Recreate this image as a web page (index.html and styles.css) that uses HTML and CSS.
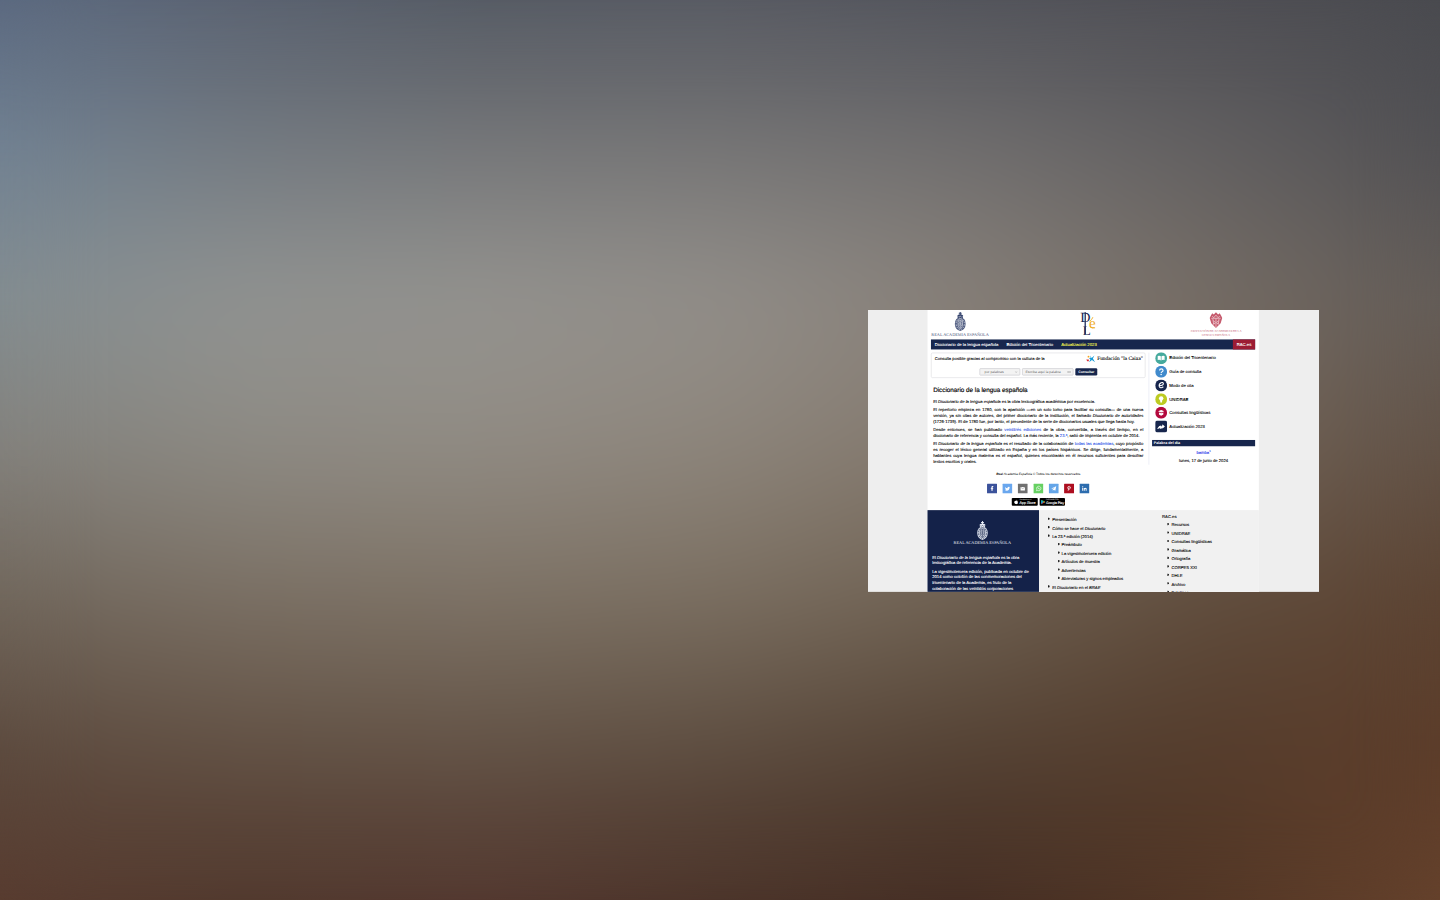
FILE: index.html
```html
<!DOCTYPE html>
<html lang="es">
<head>
<meta charset="utf-8">
<title>Diccionario de la lengua española</title>
<link rel="stylesheet" href="styles.css">
</head>
<body>
<svg width="0" height="0" class="defs" aria-hidden="true">
  <symbol id="crest" viewBox="0 0 40 60">
    <path d="M18.500 0h3v3h3v3h-3v4h-3V6h-3V3h3z" fill="currentColor"/>
    <path d="M11 11q9-7 18 0l-1 9H12z" fill="currentColor"/>
    <path d="M20 17q17 2 17 21-1 18-17 22Q4 56 3 38 3 19 20 17z" fill="currentColor" opacity=".88"/>
    <path d="M20 21q13 2 13 17-1 14-13 18Q8 52 7 38 7 23 20 21z" fill="none" stroke="var(--cut)" stroke-width="2" stroke-dasharray="5 3"/>
    <path d="M13 26h14v17q-1 7-7 9-6-2-7-9zM13 38h14M20 26v26" fill="none" stroke="var(--cut)" stroke-width="1.600"/>
    <path d="M15 29l3 5M25 29l-3 5M15 41l3 4M25 41l-3 4M13 14l3 3 4-4 4 4 3-3" fill="none" stroke="var(--cut)" stroke-width="1.600"/>
  </symbol>
</svg>
<div class="backdrop">
  <div class="band b0"></div><div class="band b1"></div><div class="band b2"></div><div class="band b3"></div>
  <div class="band b4"></div><div class="band b5"></div><div class="band b6"></div>
  <div class="soften"></div>
</div>
<main class="window">
 <div class="page">
  <div class="sheet">
   <header class="brands">
    <div class="rae"><svg class="crest"><use href="#crest"/></svg><span>REAL ACADEMIA ESPAÑOLA</span></div>
    <svg class="dle" viewBox="0 0 56 82" aria-label="DLE">
      <text x="2" y="35" class="d">D</text>
      <text x="10" y="77" class="l">L</text>
      <text x="30" y="56" class="e">e</text>
      <path d="M17.500 5v70" stroke="#192653" stroke-width="4"/>
      <path d="M31 34q8-4 11-13M32 50q6 8 17 5" stroke="#efad27" stroke-width="3" fill="none"/>
    </svg>
    <div class="asale">
      <svg viewBox="0 0 44 52" class="shield"><path d="M5 13l5-9 5 4 7-7 7 7 5-4 5 9 3 6-5 17-15 15L7 36 2 19z" fill="#c65b6e"/><path d="M7 20h30M10 13l5 5 7-8 7 8 5-5M12 22l3 18M32 22l-3 18M22 21v28M14 28l6 5M30 28l-6 5M14 38l6-3M30 38l-6-3" stroke="#fff" stroke-width="1.700" fill="none"/></svg>
      <span>ASOCIACIÓN DE ACADEMIAS DE LA<br>LENGUA ESPAÑOLA</span>
    </div>
   </header>
   <nav class="nav"><a>Diccionario de la lengua española</a><a>Edición del Tricentenario</a><a class="hot">Actualización 2023</a><a class="rac">RAC.es</a></nav>
   <div class="columns">
    <section class="main">
     <div class="search">
      <div class="sponsor"><span>Consulta posible gracias al compromiso con la cultura de la</span>
       <div class="caixa"><svg viewBox="0 0 30 26"><path d="M13 2l5 8 9-8-5 10 7 12-10-7-9 7 4-10-5-4h6z" fill="#159bd8"/><circle cx="8" cy="6" r="3" fill="#f3a51c"/><path d="M1 15h8v6H4z" fill="#d92f36"/></svg><b>Fundación "la Caixa"</b></div>
      </div>
      <div class="controls"><div class="field sel"><span>por palabras</span><svg viewBox="0 0 10 10"><path d="M2 3l3 4 3-4" fill="none" stroke="#777"/></svg></div><div class="field word"><span>Escriba aquí la palabra</span><svg viewBox="0 0 12 10"><path d="M1 5h10M1 3v4M4 3v4M8 3v4M11 3v4" fill="none" stroke="#777"/></svg></div><div class="go">Consultar</div></div>
     </div>
     <article class="copy">
      <h1>Diccionario de la lengua española</h1>
      <p><span class="end">El <i>Diccionario de la lengua española</i> es la obra lexicográfica académica por excelencia.</span></p>
      <p><span>El repertorio empieza en 1780, con la aparición —en un solo tomo para facilitar su consulta— de una nueva</span><span>versión, ya sin citas de autores, del primer diccionario de la institución, el llamado <i>Diccionario de autoridades</i></span><span class="end">(1726-1739). El de 1780 fue, por tanto, el precedente de la serie de diccionarios usuales que llega hasta hoy.</span></p>
      <p><span>Desde entonces, se han publicado <a>veintitrés ediciones</a> de la obra, convertida, a través del tiempo, en el</span><span class="end">diccionario de referencia y consulta del español. La más reciente, la <a>23.ª</a>, salió de imprenta en octubre de 2014.</span></p>
      <p><span>El <i>Diccionario de la lengua española</i> es el resultado de la colaboración de <a>todas las academias</a>, cuyo propósito</span><span>es recoger el léxico general utilizado en España y en los países hispánicos. Se dirige, fundamentalmente, a</span><span>hablantes cuya lengua materna es el español, quienes encontrarán en él recursos suficientes para descifrar</span><span class="end">textos escritos y orales.</span></p>
     </article>
     <div class="rights"><i><b>Real</b> Academia Española</i> © Todos los derechos reservados</div>
     <div class="social">
      <svg viewBox="0 0 32 32"><rect width="32" height="32" fill="#3b529b"/><path d="M14 23V17h-2v-3h2v-2q0-4 4-4h2v3h-1q-1 0-1 1v2h2l-.5 3H18v6z" fill="#fff"/></svg>
      <svg viewBox="0 0 32 32"><rect width="32" height="32" fill="#6aa7ee"/><path d="M9 11q3 4 7 4 0-5 4-5l2 1 2-1-1 3q0 10-9 10-3 0-6-2 3 0 4-1-2 0-3-2h2q-3-2-2-7z" fill="#fff"/></svg>
      <svg viewBox="0 0 32 32"><rect width="32" height="32" fill="#707070"/><path d="M9 11h14v11H9z" fill="#fff"/><path d="M9 12l7 4 7-4" stroke="#707070" stroke-width="1.500" fill="none"/></svg>
      <svg viewBox="0 0 32 32"><rect width="32" height="32" fill="#66d062"/><path d="M10 23l1-4a7 7 0 1 1 3 3z" fill="none" stroke="#fff" stroke-width="2"/><path d="M13 12q0 6 7 7l1-2-2-1-1 1-3-3 1-1-1-2z" fill="#fff"/></svg>
      <svg viewBox="0 0 32 32"><rect width="32" height="32" fill="#64a5e8"/><path d="M8 16l16-7-3 14-5-3-3 3v-5l7-6-8 5z" fill="#fff"/></svg>
      <svg viewBox="0 0 32 32"><rect width="32" height="32" fill="#ad0e20"/><path d="M13 17q-3-4 0-7 5-2 7 1 1 6-3 7l-2-1m1-5l-3 11" stroke="#fff" stroke-width="2.400" fill="none"/></svg>
      <svg viewBox="0 0 32 32"><rect width="32" height="32" fill="#2c6cae"/><path d="M9 14h3v9H9zM14 14h3v1q5-3 6 2v6h-3v-5q-1-2-3 0v5h-3z" fill="#fff"/><circle cx="10.500" cy="10.500" r="2" fill="#fff"/></svg>
     </div>
     <div class="stores">
      <div class="badge"><svg viewBox="0 0 16 18"><path d="M8 5Q11 2 14 6q-3 3 1 6-3 7-7 4-5 2-7-5 0-8 7-6zM8 4q0-3 3-4 0 3-3 4" fill="#fff"/></svg><span><small>Consíguelo en el</small>App Store</span></div>
      <div class="badge play"><svg viewBox="0 0 16 18"><path d="M1 1v16l8-8z" fill="#19bdf0"/><path d="M1 1l8 8 3-3z" fill="#36ce70"/><path d="M1 17l8-8 3 3z" fill="#ec4353"/><path d="M9 9l3-3 4 3-4 3z" fill="#fbc62e"/></svg><span><small>DISPONIBLE EN</small>Google Play</span></div>
     </div>
    </section>
    <aside class="side">
     <ul class="links">
      <li><svg viewBox="0 0 38 38"><circle cx="19" cy="19" r="19" fill="#46aa9d"/><path d="M8 12q6-3 10 1v13q-4-3-10-1zM30 12q-6-3-10 1v13q4-3 10-1z" fill="#fff"/></svg>Edición del Tricentenario</li>
      <li><svg viewBox="0 0 38 38"><circle cx="19" cy="19" r="19" fill="#408acc"/><path d="M14 15q0-5 5.500-5t5.500 5q0 3-3 4-3 1-3 4" fill="none" stroke="#fff" stroke-width="3.600"/><circle cx="19" cy="28" r="2.400" fill="#fff"/></svg>Guía de consulta</li>
      <li><svg viewBox="0 0 38 38"><circle cx="19" cy="19" r="19" fill="#17264d"/><path d="M13 20q13 0 13-7-1-5-7-3-8 4-6 12 4 8 13 1" fill="none" stroke="#fff" stroke-width="3.500"/></svg>Modo de cita</li>
      <li><svg viewBox="0 0 38 38"><circle cx="19" cy="19" r="19" fill="#bdcb22"/><circle cx="19" cy="16" r="7" fill="#fff"/><path d="M15.500 21h7l-1 8h-5z" fill="#fff"/></svg>UNIDRAE</li>
      <li><svg viewBox="0 0 38 38"><circle cx="19" cy="19" r="19" fill="#b3093d"/><path d="M9 14l10-4 10 4-10 4zM12 18l7 3 7-3v7l-7 4-7-4z" fill="#fff"/></svg>Consultas lingüísticas</li>
      <li><svg viewBox="0 0 38 38"><rect width="38" height="38" rx="7" fill="#17264d"/><path d="M6 26l7-9 6-1v4l4-5v-3l8 7-8 7v-3l-4 3h-4l-2-3-2 3z" fill="#fff"/></svg>Actualización 2023</li>
     </ul>
     <h2>Palabra del día</h2>
     <div class="bamba">bamba<sup>1</sup></div>
     <div class="date">lunes, 17 de junio de 2024</div>
    </aside>
   </div>
   <footer class="foot">
    <div class="about"><div class="logo"><svg class="crest"><use href="#crest"/></svg><span>REAL ACADEMIA ESPAÑOLA</span></div>
     <p>El <i>Diccionario de la lengua española</i> es la obra<br>lexicográfica de referencia de la Academia.</p>
     <p>La vigesimotercera edición, publicada en octubre de<br>2014 como colofón de las conmemoraciones del<br>tricentenario de la Academia, es fruto de la<br>colaboración de las veintidós corporaciones</p></div>
    <ul class="map"><li>Presentación</li><li>Cómo se hace el <i>Diccionario</i></li><li>La 23.ª edición (2014)</li><li class="sub">Preámbulo</li><li class="sub">La vigesimotercera edición</li><li class="sub">Artículos de muestra</li><li class="sub">Advertencias</li><li class="sub">Abreviaturas y signos empleados</li><li>El <i>Diccionario</i> en el <i>BRAE</i></li></ul>
    <div class="racmap">RAC.es<ul><li>Recursos</li><li>UNIDRAE</li><li>Consultas lingüísticas</li><li>Gramática</li><li>Ortografía</li><li>CORPES XXI</li><li>DHLE</li><li>Archivo</li><li>Boletines</li></ul></div>
   </footer>
  </div>
 </div>
</main>
</body>
</html>
```

FILE: styles.css
```css
* { box-sizing: border-box; }
body { margin: 0; width: 1440px; height: 900px; overflow: hidden; background: #6b6259; font-family: "Liberation Sans", Arial, sans-serif; }
.defs { position: absolute; }
ul, p, h1, h2 { margin: 0; padding: 0; list-style: none; }

/* Colour bands: each one fades in over the band above it */
.backdrop { position: absolute; inset: 0; }
.band, .soften { position: absolute; inset: 0; }
.soften { backdrop-filter: blur(45px); }
.b0 { background: linear-gradient(90deg, rgb(91,105,128), rgb(89,97,112), rgb(83,89,99), rgb(86,89,98), rgb(81,83,91), rgb(78,78,84), rgb(73,74,79)); }
.b1 { background: linear-gradient(90deg, rgb(114,131,148), rgb(116,123,130), rgb(119,120,122), rgb(119,118,118), rgb(113,111,111), rgb(99,97,98), rgb(82,81,84)); mask-image: linear-gradient(transparent 0, #000 150px); }
.b2 { background: linear-gradient(90deg, rgb(131,141,145), rgb(146,148,146), rgb(149,148,144), rgb(147,143,138), rgb(136,129,122), rgb(119,110,102), rgb(100,93,88)); mask-image: linear-gradient(transparent 150px, #000 300px); }
.b3 { background: linear-gradient(90deg, rgb(131,129,124), rgb(141,138,131), rgb(145,139,131), rgb(141,133,123), rgb(130,119,108), rgb(115,101,89), rgb(98,82,70)); mask-image: linear-gradient(transparent 300px, #000 450px); }
.b4 { background: linear-gradient(90deg, rgb(112,102,91), rgb(122,111,99), rgb(125,114,101), rgb(122,110,96), rgb(111,97,82), rgb(96,77,61), rgb(92,67,50)); mask-image: linear-gradient(transparent 450px, #000 600px); }
.b5 { background: linear-gradient(90deg, rgb(92,74,62), rgb(98,81,68), rgb(99,83,70), rgb(93,77,64), rgb(84,66,52), rgb(84,60,44), rgb(93,61,42)); mask-image: linear-gradient(transparent 600px, #000 750px); }
.b6 { background: linear-gradient(90deg, rgb(88,59,47), rgb(80,55,44), rgb(82,54,46), rgb(74,50,40), rgb(68,45,35), rgb(82,54,37), rgb(102,66,44)); mask-image: linear-gradient(transparent 750px, #000 900px); }

.window { position: absolute; left: 868px; top: 310px; width: 451px; height: 281.500px; overflow: hidden; }
.page { width: 1440px; height: 900px; padding: 0 192px 0 190px; background: #eee; color: #000; font-size: 13.330px; overflow: hidden; transform: scale(.3132); transform-origin: 0 0; text-rendering: geometricPrecision; -webkit-text-stroke: .3px; }
.sheet { width: 1058px; background: #fff; }

.brands { height: 94px; padding: 6px 54px 0 12px; display: flex; justify-content: space-between; }
.rae, .logo { display: flex; flex-direction: column; align-items: center; font: 13.600px "Liberation Serif", serif; white-space: nowrap; -webkit-text-stroke: 0; }
.rae { color: #4b587d; --cut: #fff; width: 184px; }
.crest { width: 41px; height: 61px; }
.rae .crest { color: #34436d; }
.rae span { margin-top: 3px; }
.dle { width: 56px; height: 82px; margin: -4px 0 0 118px; font-family: "Liberation Serif", serif; overflow: visible; }
.dle .d { font-size: 45px; fill: #192653; }
.dle .l { font-size: 42px; fill: #192653; }
.dle .e { font-size: 48px; fill: #efad27; }
.asale { width: 166px; margin-left: 124px; display: flex; flex-direction: column; align-items: center; color: #be5167; font: 9.600px/12px "Liberation Serif", serif; text-align: center; white-space: nowrap; -webkit-text-stroke: 0; }
.shield { width: 44px; height: 53px; margin-bottom: 4px; }

.nav { margin: 0 12px 0 11px; height: 32px; background: #17264d; color: #fff; display: flex; align-items: center; gap: 26px; padding-left: 12px; font-size: 13.550px; }
.hot { color: #ffff4d; }
.rac { margin-left: auto; width: 71px; height: 32px; line-height: 32px; background: #9c1c34; text-align: center; }

.columns { height: 513px; padding: 10px 12px 0 11px; display: flex; }
.main { width: 685px; flex: none; }
.search { height: 81px; border: 2px solid #dedee1; border-radius: 5px; padding: 5px 6px 0 10px; }
.sponsor { display: flex; justify-content: space-between; height: 43px; align-items: flex-start; line-height: 28px; white-space: nowrap; }
.caixa { display: flex; gap: 6px; }
.caixa svg { width: 30px; height: 26px; }
.caixa b { font: 17px/26px "Liberation Serif", serif; }
.controls { display: flex; gap: 6px; padding-left: 143px; height: 23px; font-size: 11px; color: #666; -webkit-text-stroke: 0; }
.field { border: 2px solid #c9c9ce; border-radius: 3px; background: #f3f3f3; display: flex; justify-content: space-between; align-items: center; padding: 0 6px 0 10px; white-space: nowrap; }
.sel { width: 130px; padding-left: 14px; }
.sel svg { width: 10px; }
.word { width: 164px; padding-left: 9px; }
.word svg { width: 12px; }
.go { width: 70px; background: #17264d; border-radius: 4px; color: #fff; text-align: center; font-weight: bold; line-height: 23px; }

.copy { padding: 25px 7px 0; line-height: 19px; }
.copy h1 { font: 20.100px/26px "Liberation Sans", sans-serif; margin-bottom: 14px; -webkit-text-stroke: .5px; }
.copy p { margin-bottom: 7px; }
.copy span { display: block; text-align: justify; text-align-last: justify; white-space: nowrap; }
.copy span.end { text-align-last: left; }
.copy a { color: #3359e8; }
.rights { margin-top: 17px; height: 28px; font-size: 10.200px; line-height: 28px; text-align: center; -webkit-text-stroke: 0; }
.social { display: flex; justify-content: center; gap: 17.300px; margin: 16px 0 0 0; }
.social svg { width: 32px; height: 32px; border-radius: 2px; }
.stores { display: flex; justify-content: center; gap: 6px; margin-top: 14px; }
.badge { width: 83px; height: 25px; background: #000; color: #fff; border-radius: 3px; display: flex; align-items: center; gap: 4px; padding-left: 7px; font-size: 12px; line-height: 11px; white-space: nowrap; letter-spacing: -.2px; }
.badge svg { width: 14px; height: 16px; }
.badge small { display: block; font-size: 5.500px; line-height: 6px; -webkit-text-stroke: 0; }
.play { padding-left: 4px; width: 81px; gap: 3px; }
.play span { font-size: 11px; }

.side { width: 340px; height: 358px; margin-left: 10px; border-left: 2px solid #e1e5f2; padding-left: 9px; }
.links { height: 279px; padding: 0 0 0 10px; margin-top: -4px; font-size: 13.550px; }
.links li { height: 43.600px; display: flex; align-items: center; gap: 7px; }
.links svg { width: 38px; height: 38px; }
.side h2 { height: 20px; margin-top: 4px; background: #17264d; color: #fff; font-size: 12px; line-height: 20px; padding-left: 5px; -webkit-text-stroke: 0; }
.bamba { text-align: center; color: #2733ea; height: 37px; line-height: 42px; }
.bamba sup { font-size: 9px; line-height: 0; }
.date { text-align: center; line-height: 20px; }

.foot { height: 261px; background: #f1f1f1; display: flex; }
.about { width: 356px; background: #142249; color: #fff; padding: 35px 15px 0; line-height: 18.300px; white-space: nowrap; }
.logo { color: #e8edf6; --cut: #142249; height: 107px; padding-right: 6px; }
.logo .crest { height: 60px; }
.logo span { margin-top: 1px; line-height: 16px; }
.about p { margin-bottom: 8px; }
.map, .racmap ul { line-height: 27px; white-space: nowrap; }
.map { width: 393px; padding: 17px 0 0 42px; }
.map li::before, .racmap li::before { content: ""; display: inline-block; width: 5px; height: 7px; background: #111; border-radius: 0 4px 4px 0; position: relative; top: -4px; left: -13px; margin-right: -5px; }
.map .sub { padding-left: 30px; }
.map .sub::before { left: -11px; }
.racmap { padding-top: 13px; line-height: 18px; }
.racmap ul { padding-left: 30px; margin-top: 3px; }
```
